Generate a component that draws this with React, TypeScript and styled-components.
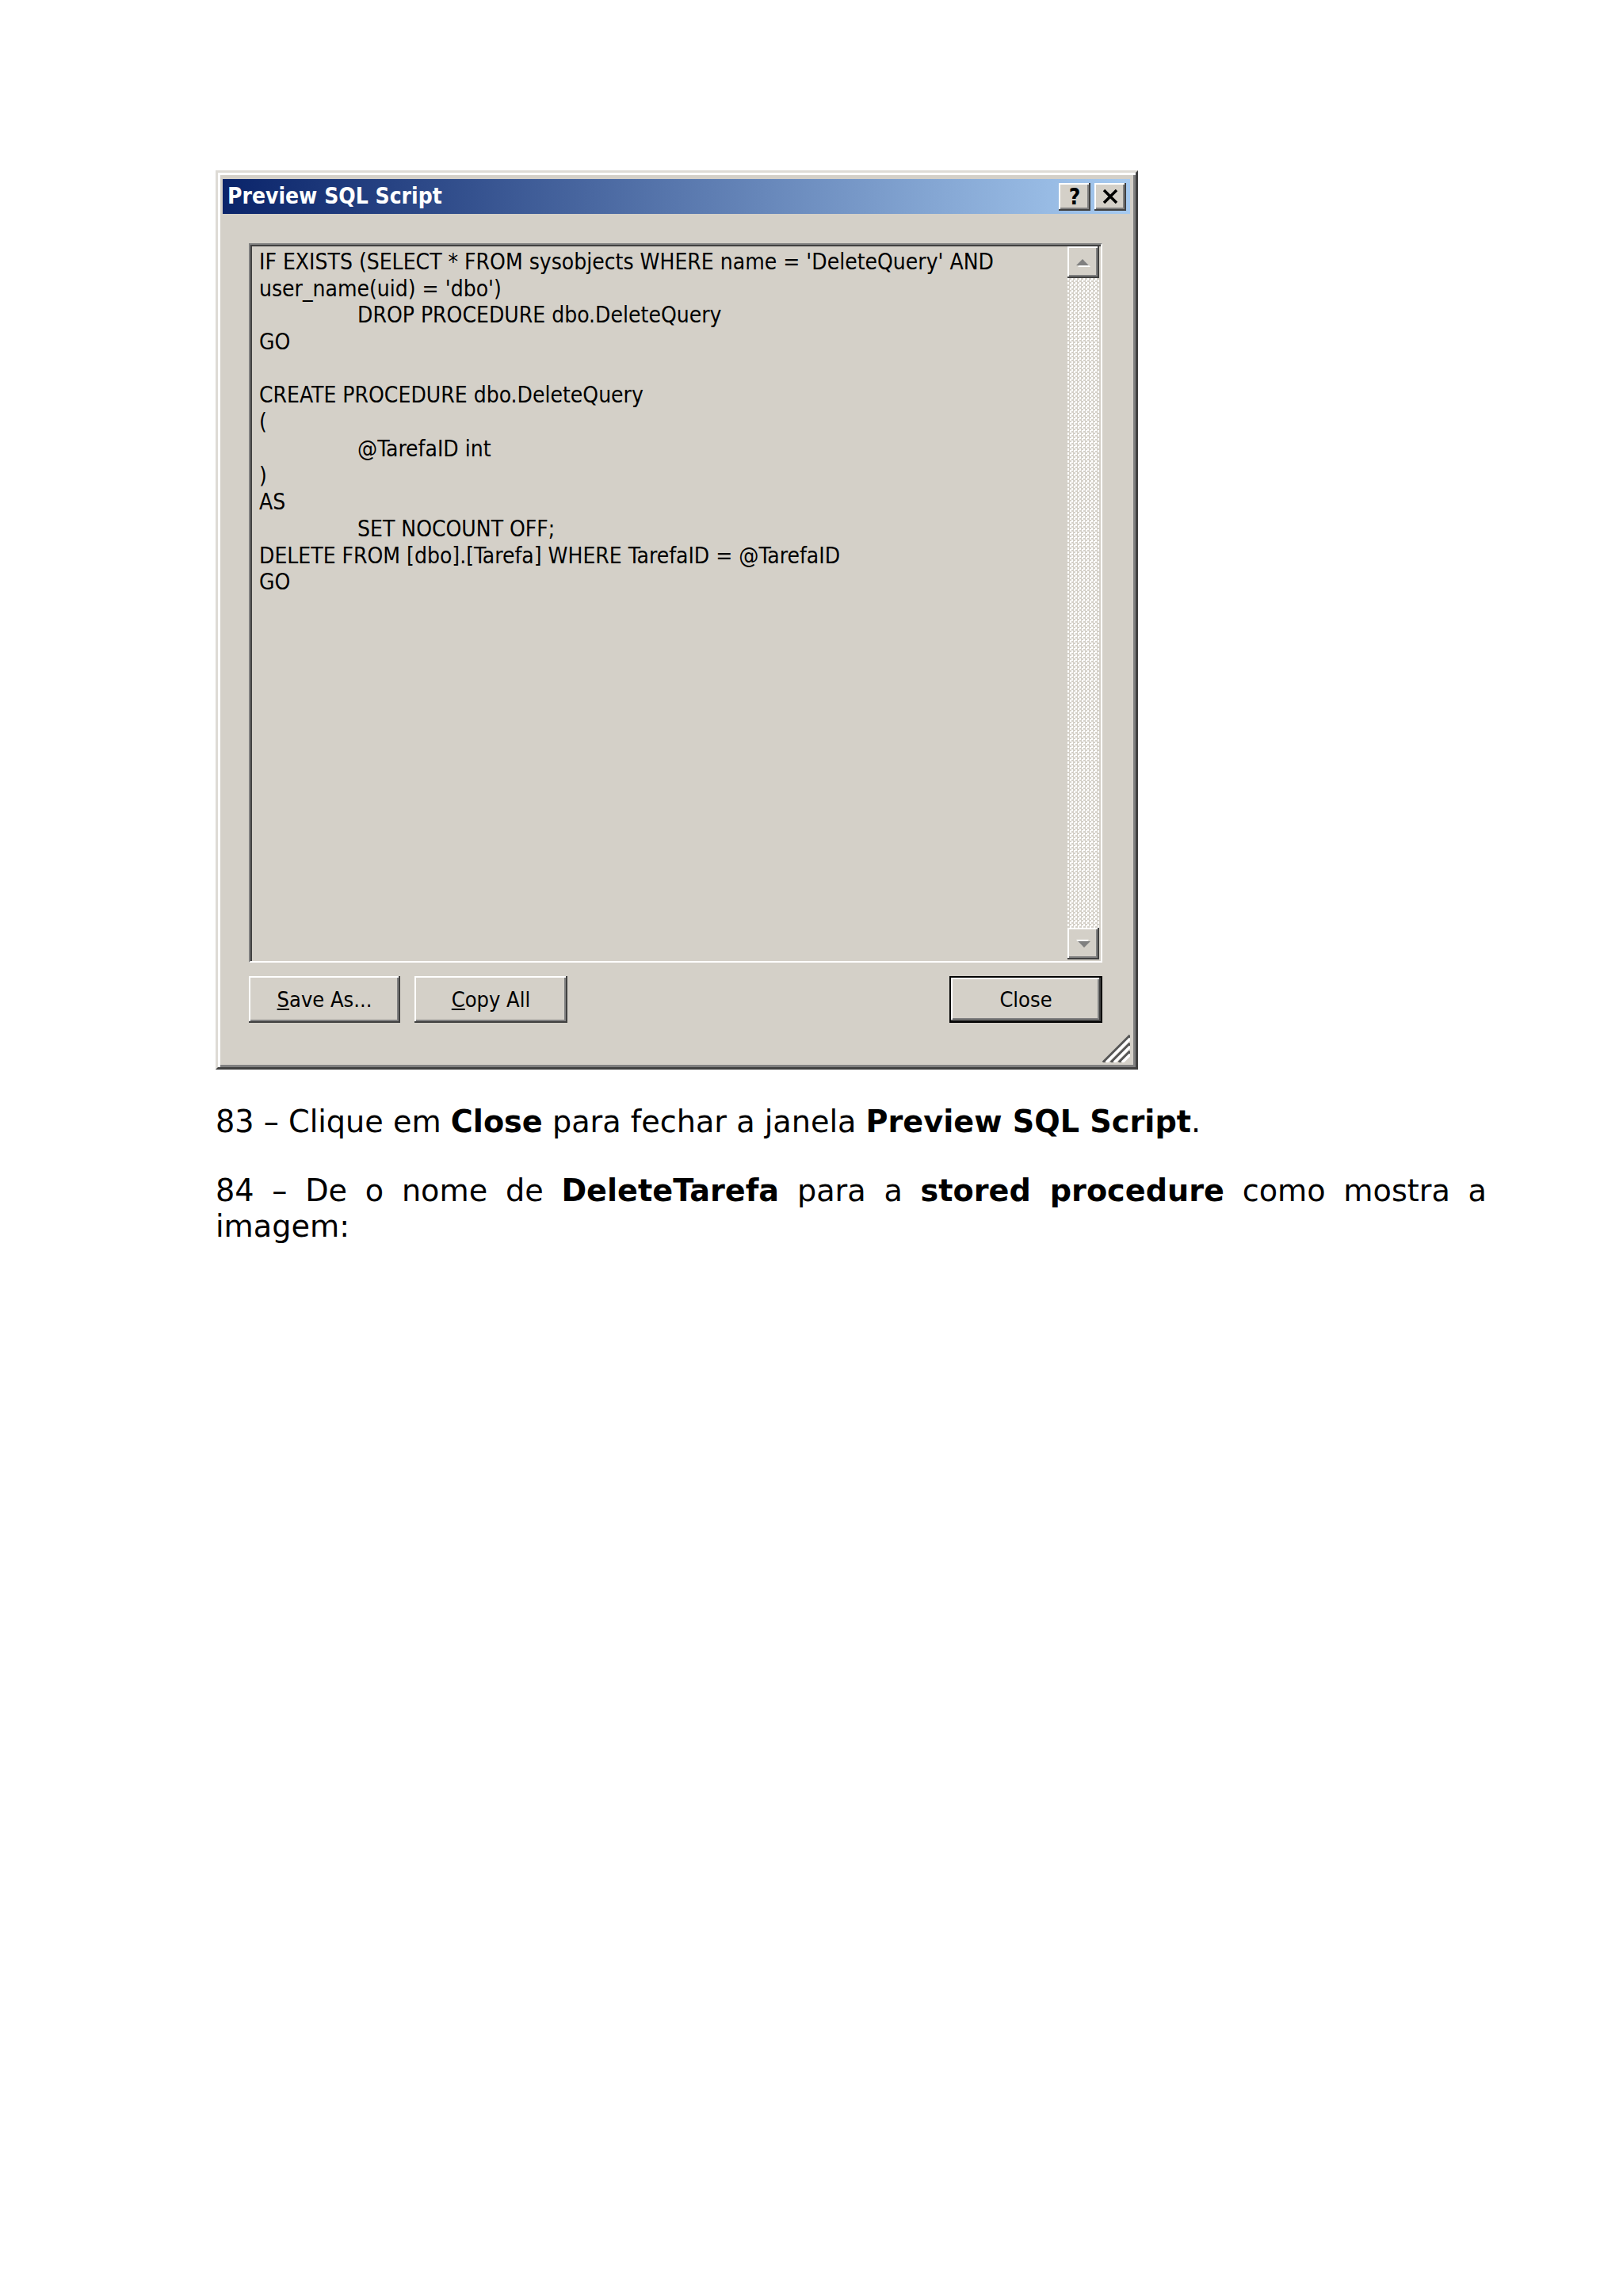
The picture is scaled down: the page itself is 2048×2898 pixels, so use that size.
import React from 'react'
import styled, { createGlobalStyle } from 'styled-components'

const GlobalStyle = createGlobalStyle`
  html, body {
    margin: 0;
    padding: 0;
    background: #ffffff;
  }
  body {
    font-family: "DejaVu Sans", Verdana, sans-serif;
  }
`

const Page = styled.div`
  width: 2048px;
  min-height: 2898px;
  box-sizing: border-box;
  padding: 215px 172px 0 272px;
`

const Dialog = styled.div`
  width: 1164px;
  height: 1135px;
  box-sizing: border-box;
  background: #d4d0c8;
  border-style: solid;
  border-width: 3px;
  border-color: #dedbd5 #404040 #404040 #dedbd5;
  box-shadow: inset 3px 3px 0 #ffffff, inset -3px -3px 0 #808080;
  padding: 8px 7px 6px 6px;
  display: flex;
  flex-direction: column;
  font-family: "DejaVu Sans Condensed", "DejaVu Sans", sans-serif;
`

const TitleBar = styled.div`
  height: 44px;
  flex-shrink: 0;
  display: flex;
  align-items: center;
  padding: 0 5px 0 6px;
  background: linear-gradient(to right, #0a246a, #a6caf0);
`

const TitleText = styled.div`
  flex: 1;
  color: #ffffff;
  font-weight: bold;
  font-size: 28px;
  line-height: 1;
`

const CaptionButtons = styled.div`
  display: flex;
  gap: 5px;
`

const Raised = `
  background: #d4d0c8;
  box-shadow:
    inset -2px -2px 0 #404040,
    inset 2px 2px 0 #ffffff,
    inset -4px -4px 0 #808080;
`

const CaptionButton = styled.div`
  ${Raised}
  width: 40px;
  height: 35px;
  display: flex;
  align-items: center;
  justify-content: center;
  font-weight: bold;
  font-size: 28px;
  color: #000000;
`

const Body = styled.div`
  display: flex;
  flex-direction: column;
  padding: 37px 35px 0 33px;
`

const ScriptBox = styled.div`
  height: 908px;
  box-sizing: border-box;
  display: flex;
  border: 2px solid;
  border-color: #808080 #ffffff #ffffff #808080;
  box-shadow: inset 2px 2px 0 #404040, inset -2px -2px 0 #d4d0c8;
  padding: 2px;
`

const ScriptText = styled.div`
  flex: 1;
  padding: 3px 0 0 9px;
  font-size: 28px;
  line-height: 33.7px;
  color: #000000;
`

const ScriptLine = styled.div<{ $indent?: boolean }>`
  white-space: pre;
  height: 33.7px;
  padding-left: ${(p) => (p.$indent ? '124px' : '0')};
`

const Scrollbar = styled.div`
  width: 40px;
  display: flex;
  flex-direction: column;
`

const ScrollButton = styled.div`
  ${Raised}
  width: 40px;
  height: 40px;
  display: flex;
  align-items: center;
  justify-content: center;
`

const ScrollTrack = styled.div`
  flex: 1;
  background-color: #ffffff;
  background-image: repeating-conic-gradient(#d4d0c8 0 25%, #ffffff 0 50%);
  background-size: 5px 5px;
`

const ButtonRow = styled.div`
  display: flex;
  gap: 18px;
  margin-top: 17px;
`

const PushButton = styled.div<{ $default?: boolean; $w: number }>`
  ${Raised}
  width: ${(p) => p.$w}px;
  height: 59px;
  box-sizing: border-box;
  display: flex;
  align-items: center;
  justify-content: center;
  font-size: 27px;
  color: #000000;
  ${(p) =>
    p.$default &&
    `
    margin-left: auto;
    border: 2px solid #000000;
  `}
`

const Footer = styled.div`
  flex: 1;
  display: flex;
  justify-content: flex-end;
  align-items: flex-end;
`

const Text = styled.div`
  margin-top: 44px;
  color: #000000;
  font-family: "DejaVu Sans", Verdana, sans-serif;
  font-size: 38.2px;
  line-height: 45px;
`

const Paragraph = styled.p`
  margin: 0 0 42px;
  text-align: justify;
`

const scriptLines: { text: string; indent?: boolean }[] = [
  { text: "IF EXISTS (SELECT * FROM sysobjects WHERE name = 'DeleteQuery' AND" },
  { text: "user_name(uid) = 'dbo')" },
  { text: 'DROP PROCEDURE dbo.DeleteQuery', indent: true },
  { text: 'GO' },
  { text: '' },
  { text: 'CREATE PROCEDURE dbo.DeleteQuery' },
  { text: '(' },
  { text: '@TarefaID int', indent: true },
  { text: ')' },
  { text: 'AS' },
  { text: 'SET NOCOUNT OFF;', indent: true },
  { text: 'DELETE FROM [dbo].[Tarefa] WHERE TarefaID = @TarefaID' },
  { text: 'GO' },
]

const CloseGlyph = () => (
  <svg width="20" height="18" viewBox="0 0 20 18">
    <path d="M2 1 L18 17 M18 1 L2 17" stroke="#000" strokeWidth="3.5" />
  </svg>
)

const Arrow = ({ down }: { down?: boolean }) => (
  <svg width="18" height="11" viewBox="0 0 18 11" style={down ? { transform: 'rotate(180deg)' } : undefined}>
    <polygon points="10,3 18,11 2,11" fill="#ffffff" />
    <polygon points="8,1 16,9 0,9" fill="#808080" />
  </svg>
)

const Grip = () => (
  <svg width="38" height="38" viewBox="0 0 38 38">
    <g strokeWidth="3.5">
      <path d="M38 4 L4 38" stroke="#555555" />
      <path d="M38 8 L8 38" stroke="#ffffff" />
      <path d="M38 14 L14 38" stroke="#555555" />
      <path d="M38 18 L18 38" stroke="#ffffff" />
      <path d="M38 24 L24 38" stroke="#555555" />
      <path d="M38 28 L28 38" stroke="#ffffff" />
    </g>
  </svg>
)

const App = () => {
  return (
    <Page>
      <GlobalStyle />
      <Dialog>
        <TitleBar>
          <TitleText>Preview SQL Script</TitleText>
          <CaptionButtons>
            <CaptionButton>?</CaptionButton>
            <CaptionButton>
              <CloseGlyph />
            </CaptionButton>
          </CaptionButtons>
        </TitleBar>

        <Body>
          <ScriptBox>
            <ScriptText>
              {scriptLines.map((line, index) => (
                <ScriptLine key={`scriptLine_${index + 1}`} $indent={line.indent}>
                  {line.text}
                </ScriptLine>
              ))}
            </ScriptText>
            <Scrollbar>
              <ScrollButton>
                <Arrow />
              </ScrollButton>
              <ScrollTrack />
              <ScrollButton>
                <Arrow down />
              </ScrollButton>
            </Scrollbar>
          </ScriptBox>

          <ButtonRow>
            <PushButton $w={191}>
              <u>S</u>ave As...
            </PushButton>
            <PushButton $w={193}>
              <u>C</u>opy All
            </PushButton>
            <PushButton $w={193} $default>
              Close
            </PushButton>
          </ButtonRow>
        </Body>

        <Footer>
          <Grip />
        </Footer>
      </Dialog>

      <Text>
        <Paragraph>
          83 – Clique em <b>Close</b> para fechar a janela <b>Preview SQL Script</b>.
        </Paragraph>
        <Paragraph>
          84 – De o nome de <b>DeleteTarefa</b> para a <b>stored procedure</b> como mostra a imagem:
        </Paragraph>
      </Text>
    </Page>
  )
}
export default App
